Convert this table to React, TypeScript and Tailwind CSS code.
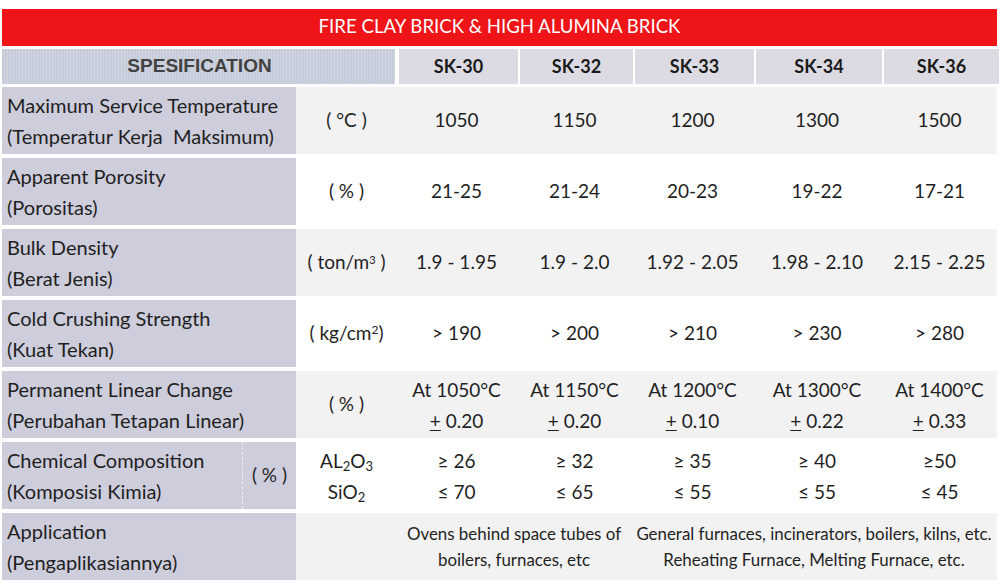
import type { ReactNode } from "react";

const COLS = ["w-[119px]", "w-[113px]", "w-[119px]", "w-[126px]", "w-[115px]"];
const GRADES = ["SK-30", "SK-32", "SK-33", "SK-34", "SK-36"];

interface SpecRow {
  en: string;
  id: string;
  unit: ReactNode;
  values: ReactNode[];
  shaded: boolean;
}

const PlusMinus = ({ v }: { v: string }) => (
  <span>
    <span className="underline underline-offset-2">+</span> {v}
  </span>
);

const ROWS: SpecRow[] = [
  {
    en: "Maximum Service Temperature",
    id: "(Temperatur Kerja\u00a0 Maksimum)",
    unit: "( °C )",
    values: ["1050", "1150", "1200", "1300", "1500"],
    shaded: true,
  },
  {
    en: "Apparent Porosity",
    id: "(Porositas)",
    unit: "( % )",
    values: ["21-25", "21-24", "20-23", "19-22", "17-21"],
    shaded: false,
  },
  {
    en: "Bulk Density",
    id: "(Berat Jenis)",
    unit: (
      <span>
        ( ton/m<sup className="text-[11px]">3</sup> )
      </span>
    ),
    values: ["1.9 - 1.95", "1.9 - 2.0", "1.92 - 2.05", "1.98 - 2.10", "2.15 - 2.25"],
    shaded: true,
  },
  {
    en: "Cold Crushing Strength",
    id: "(Kuat Tekan)",
    unit: (
      <span>
        ( kg/cm<sup className="text-[12px]">2</sup>)
      </span>
    ),
    values: ["> 190", "> 200", "> 210", "> 230", "> 280"],
    shaded: false,
  },
  {
    en: "Permanent Linear Change",
    id: "(Perubahan Tetapan Linear)",
    unit: "( % )",
    values: [
      ["At 1050°C", "0.20"],
      ["At 1150°C", "0.20"],
      ["At 1200°C", "0.10"],
      ["At 1300°C", "0.22"],
      ["At 1400°C", "0.33"],
    ].map(([t, v]) => (
      <div className="flex flex-col items-center leading-[31px]">
        <span>{t}</span>
        <PlusMinus v={v} />
      </div>
    )),
    shaded: true,
  },
];

const CHEM = [
  ["≥ 26", "≤ 70"],
  ["≥ 32", "≤ 65"],
  ["≥ 35", "≤ 55"],
  ["≥ 40", "≤ 55"],
  ["≥50", "≤ 45"],
];

function Label({ en, id, className = "w-[294px]" }: { en: string; id: string; className?: string }) {
  return (
    <div className={`${className} bg-[#cdcddb] flex flex-col justify-center pl-[5px] text-[20px] leading-[31px] whitespace-nowrap`}>
      <span>{en}</span>
      <span>{id}</span>
    </div>
  );
}

export default function App() {
  return (
    <div
      className="w-[1000px] h-[588px] bg-white pt-[9px] pl-[2px] text-[19px] text-[#1f1f1f] overflow-hidden"
      style={{ fontFamily: "Lato, 'Open Sans', sans-serif" }}
    >
      <div className="w-[995px] h-[37px] bg-[#ee1417] flex items-center justify-center text-white text-[18.6px] pb-[1px]">
        FIRE CLAY BRICK &amp; HIGH ALUMINA BRICK
      </div>

      <div className="flex gap-[2px] mt-[3px] h-[35px]">
        <div
          className="w-[393px] flex items-center justify-center pl-[2px] font-bold text-[19px] text-[#424242] bg-[repeating-linear-gradient(90deg,#c6ccda_0px,#c6ccda_2px,#d0d5e0_2px,#d0d5e0_3px)]"
          style={{ fontFamily: "'Liberation Sans', Arial, sans-serif" }}
        >
          SPESIFICATION
        </div>
        {GRADES.map((g, i) => (
          <div key={g} className={`${COLS[i]} ${i === 0 ? "ml-[2px] w-[117px]" : ""} bg-[#dcdbe3] flex items-center justify-center font-bold text-[18px] text-[#1a1a1a]`}>
            {g}
          </div>
        ))}
      </div>

      <div className="flex flex-col gap-[4px] mt-[3px]">
        {ROWS.map((r) => (
          <div key={r.en} className="flex h-[67px]">
            <Label en={r.en} id={r.id} />
            <div className={`flex ${r.shaded ? "bg-[#f2f2f3]" : "bg-white"}`}>
              <div className="w-[101px] flex items-center justify-center">{r.unit}</div>
              <div className="flex gap-[2px]">
                {r.values.map((v, i) => (
                  <div key={i} className={`${COLS[i]} flex items-center justify-center whitespace-nowrap`}>
                    {v}
                  </div>
                ))}
              </div>
            </div>
          </div>
        ))}

        <div className="flex h-[67px]">
          <Label en="Chemical Composition" id="(Komposisi Kimia)" className="w-[240px]" />
          <div className="w-[54px] bg-[#cdcddb] border-l border-dashed border-[#eeeef4] flex items-center justify-center">
            ( % )
          </div>
          <div className="flex bg-white">
            <div className="w-[101px] flex flex-col items-center justify-center leading-[31px]">
              <span>
                AL<sub className="text-[13px]">2</sub>O<sub className="text-[13px]">3</sub>
              </span>
              <span>
                SiO<sub className="text-[13px]">2</sub>
              </span>
            </div>
            <div className="flex gap-[2px]">
              {CHEM.map(([a, b], i) => (
                <div key={i} className={`${COLS[i]} flex flex-col items-center justify-center leading-[31px]`}>
                  <span>{a}</span>
                  <span>{b}</span>
                </div>
              ))}
            </div>
          </div>
        </div>

        <div className="flex h-[67px]">
          <Label en="Application" id="(Pengaplikasiannya)" />
          <div className="flex bg-[#f2f2f3] text-[16.9px] leading-[26px]">
            <div className="w-[101px]" />
            <div className="w-[234px] flex flex-col items-center justify-center whitespace-nowrap">
              <span>Ovens behind space tubes of</span>
              <span>boilers, furnaces, etc</span>
            </div>
            <div className="w-[366px] flex flex-col items-center justify-center whitespace-nowrap">
              <span>General furnaces, incinerators, boilers, kilns, etc.</span>
              <span>Reheating Furnace, Melting Furnace, etc.</span>
            </div>
          </div>
        </div>
      </div>
    </div>
  );
}
